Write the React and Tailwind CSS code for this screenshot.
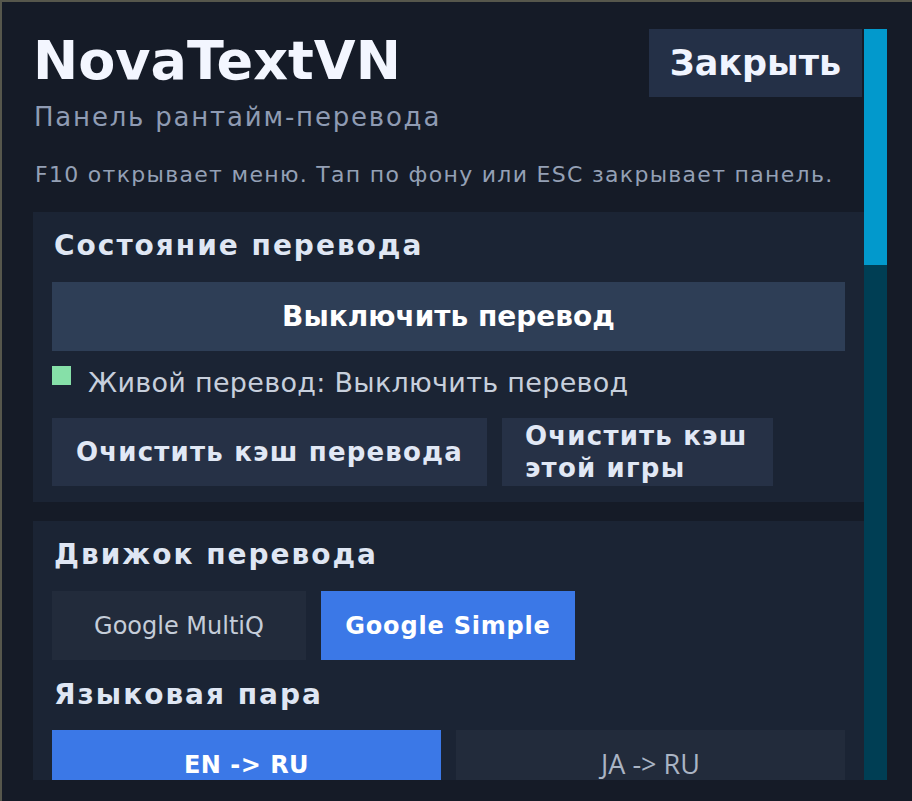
import React, { useState } from "react";

const engines = ["Google MultiQ", "Google Simple"];
const pairs = ["EN -> RU", "JA -> RU"];

const Section = ({ children }) => (
  <div className="bg-[#1b2434] px-[19px] pt-[19px] pb-[16px]">{children}</div>
);

const SectionTitle = ({ children }) => (
  <h2 className="pl-[2px] text-[28px] leading-[30px] font-bold tracking-[2px] text-[#dfe6f3]">
    {children}
  </h2>
);

const NovaPanel = () => {
  const [engine, setEngine] = useState("Google Simple");
  const [pair, setPair] = useState("EN -> RU");

  return (
    <div
      className="h-[801px] w-[912px] overflow-hidden bg-[#56574c] pt-[2px] pl-[2px]"
      style={{ fontFamily: '"DejaVu Sans", sans-serif' }}
    >
      <div className="flex h-[799px] bg-[#151b27] pt-[27px] pb-[21px] pl-[31px] pr-[25px]">
        {/* scrollable content */}
        <div className="flex-1 overflow-hidden">
          <div className="flex items-start justify-between pr-[2px]">
            <div>
              <h1 className="text-[54px] leading-[64px] font-bold text-[#f3f6ff]">
                NovaTextVN
              </h1>
              <p className="mt-[9px] pl-[1px] text-[26px] leading-[30px] tracking-[1.8px] text-[#8f9bb3]">
                Панель рантайм-перевода
              </p>
            </div>
            <button className="h-[68px] w-[213px] bg-[#243047] text-[35px] font-bold text-[#f0f4ff]">
              Закрыть
            </button>
          </div>

          <p className="mt-[30px] pl-[2px] text-[22px] leading-[26px] tracking-[1.3px] text-[#94a0b5]">
            F10 открывает меню. Тап по фону или ESC закрывает панель.
          </p>

          <div className="mt-[24px] flex flex-col gap-[19px]">
            <Section>
              <SectionTitle>Состояние перевода</SectionTitle>
              <button className="mt-[21px] h-[69px] w-full bg-[#2e3e56] text-[28px] font-bold text-white">
                Выключить перевод
              </button>
              <div className="mt-[15px] flex items-start gap-[17px]">
                <span className="h-[19px] w-[19px] bg-[#86e0a8]" />
                <span className="pt-[2px] text-[27px] leading-[30px] tracking-[0.3px] text-[#c7cfdc]">
                  Живой перевод: Выключить перевод
                </span>
              </div>
              <div className="mt-[20px] flex gap-[15px]">
                <button className="h-[68px] w-[435px] bg-[#263146] px-[23px] text-[26px] font-bold tracking-[1.2px] text-[#e1e8f5]">
                  Очистить кэш перевода
                </button>
                <button className="h-[68px] w-[271px] bg-[#263146] px-[23px] text-left text-[26px] leading-[32px] font-bold tracking-[1.2px] text-[#e1e8f5]">
                  Очистить кэш этой игры
                </button>
              </div>
            </Section>

            <Section>
              <SectionTitle>Движок перевода</SectionTitle>
              <div className="mt-[21px] flex gap-[15px]">
                {engines.map((name) =>
                  name === engine ? (
                    <button
                      key={name}
                      onClick={() => setEngine(name)}
                      className="h-[69px] w-[254px] bg-[#3b78e7] text-[24px] font-bold tracking-[0.8px] text-white"
                    >
                      {name}
                    </button>
                  ) : (
                    <button
                      key={name}
                      onClick={() => setEngine(name)}
                      className="h-[69px] w-[254px] bg-[#222b3b] text-[24px] text-[#c5cdd9]"
                    >
                      {name}
                    </button>
                  )
                )}
              </div>
              <div className="mt-[20px]">
                <SectionTitle>Языковая пара</SectionTitle>
              </div>
              <div className="mt-[20px] flex gap-[15px]">
                {pairs.map((name) =>
                  name === pair ? (
                    <button
                      key={name}
                      onClick={() => setPair(name)}
                      className="h-[69px] flex-1 bg-[#3b78e7] text-[24px] font-bold tracking-[0.5px] text-white"
                    >
                      {name}
                    </button>
                  ) : (
                    <button
                      key={name}
                      onClick={() => setPair(name)}
                      className="h-[69px] flex-1 bg-[#222b3b] font-['Open_Sans',sans-serif] text-[27px] text-[#aab4c4]"
                    >
                      {name}
                    </button>
                  )
                )}
              </div>
            </Section>
          </div>
        </div>

        {/* scrollbar */}
        <div className="w-[23px] bg-[#003e54]">
          <div className="h-[236px] bg-[#0299cc]" />
        </div>
      </div>
    </div>
  );
};

export default function App() {
  return <NovaPanel />;
}
